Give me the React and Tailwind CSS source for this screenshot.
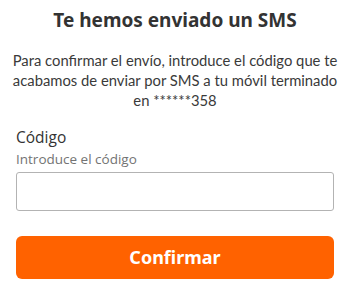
export default function App() {
  return (
    <div className="w-[350px] h-[294px] bg-white px-4 pt-[7px] text-[#333333] font-['Noto_Sans',sans-serif]">
      <h1 className="text-center text-[19px] font-bold leading-[26px] text-[#333333]">
        Te hemos enviado un SMS
      </h1>
      <p className="mt-[17px] -mx-2 whitespace-nowrap text-center text-[14.8px] leading-[20px] text-[#3a3a3a] font-['Lato',sans-serif]">
        Para confirmar el envío, introduce el código que te
        <br />
        acabamos de enviar por SMS a tu móvil terminado
        <br />
        en ******358
      </p>
      <div className="mt-[17px] font-['Open_Sans',sans-serif]">
        <label className="block text-[15.5px] leading-[20px] text-[#333333]">Código</label>
        <div className="mt-[3px] text-[13.5px] leading-[18px] text-[#737373]">Introduce el código</div>
        <input
          type="text"
          className="mt-[4px] block w-[318px] h-[39px] rounded-[3px] border border-[#b3b3b3] bg-white outline-none"
        />
      </div>
      <button className="mt-[25px] w-[318px] h-[43px] rounded-[6px] bg-[#ff6200] text-white text-[18px] font-bold font-['Noto_Sans',sans-serif]">
        Confirmar
      </button>
    </div>
  );
}
